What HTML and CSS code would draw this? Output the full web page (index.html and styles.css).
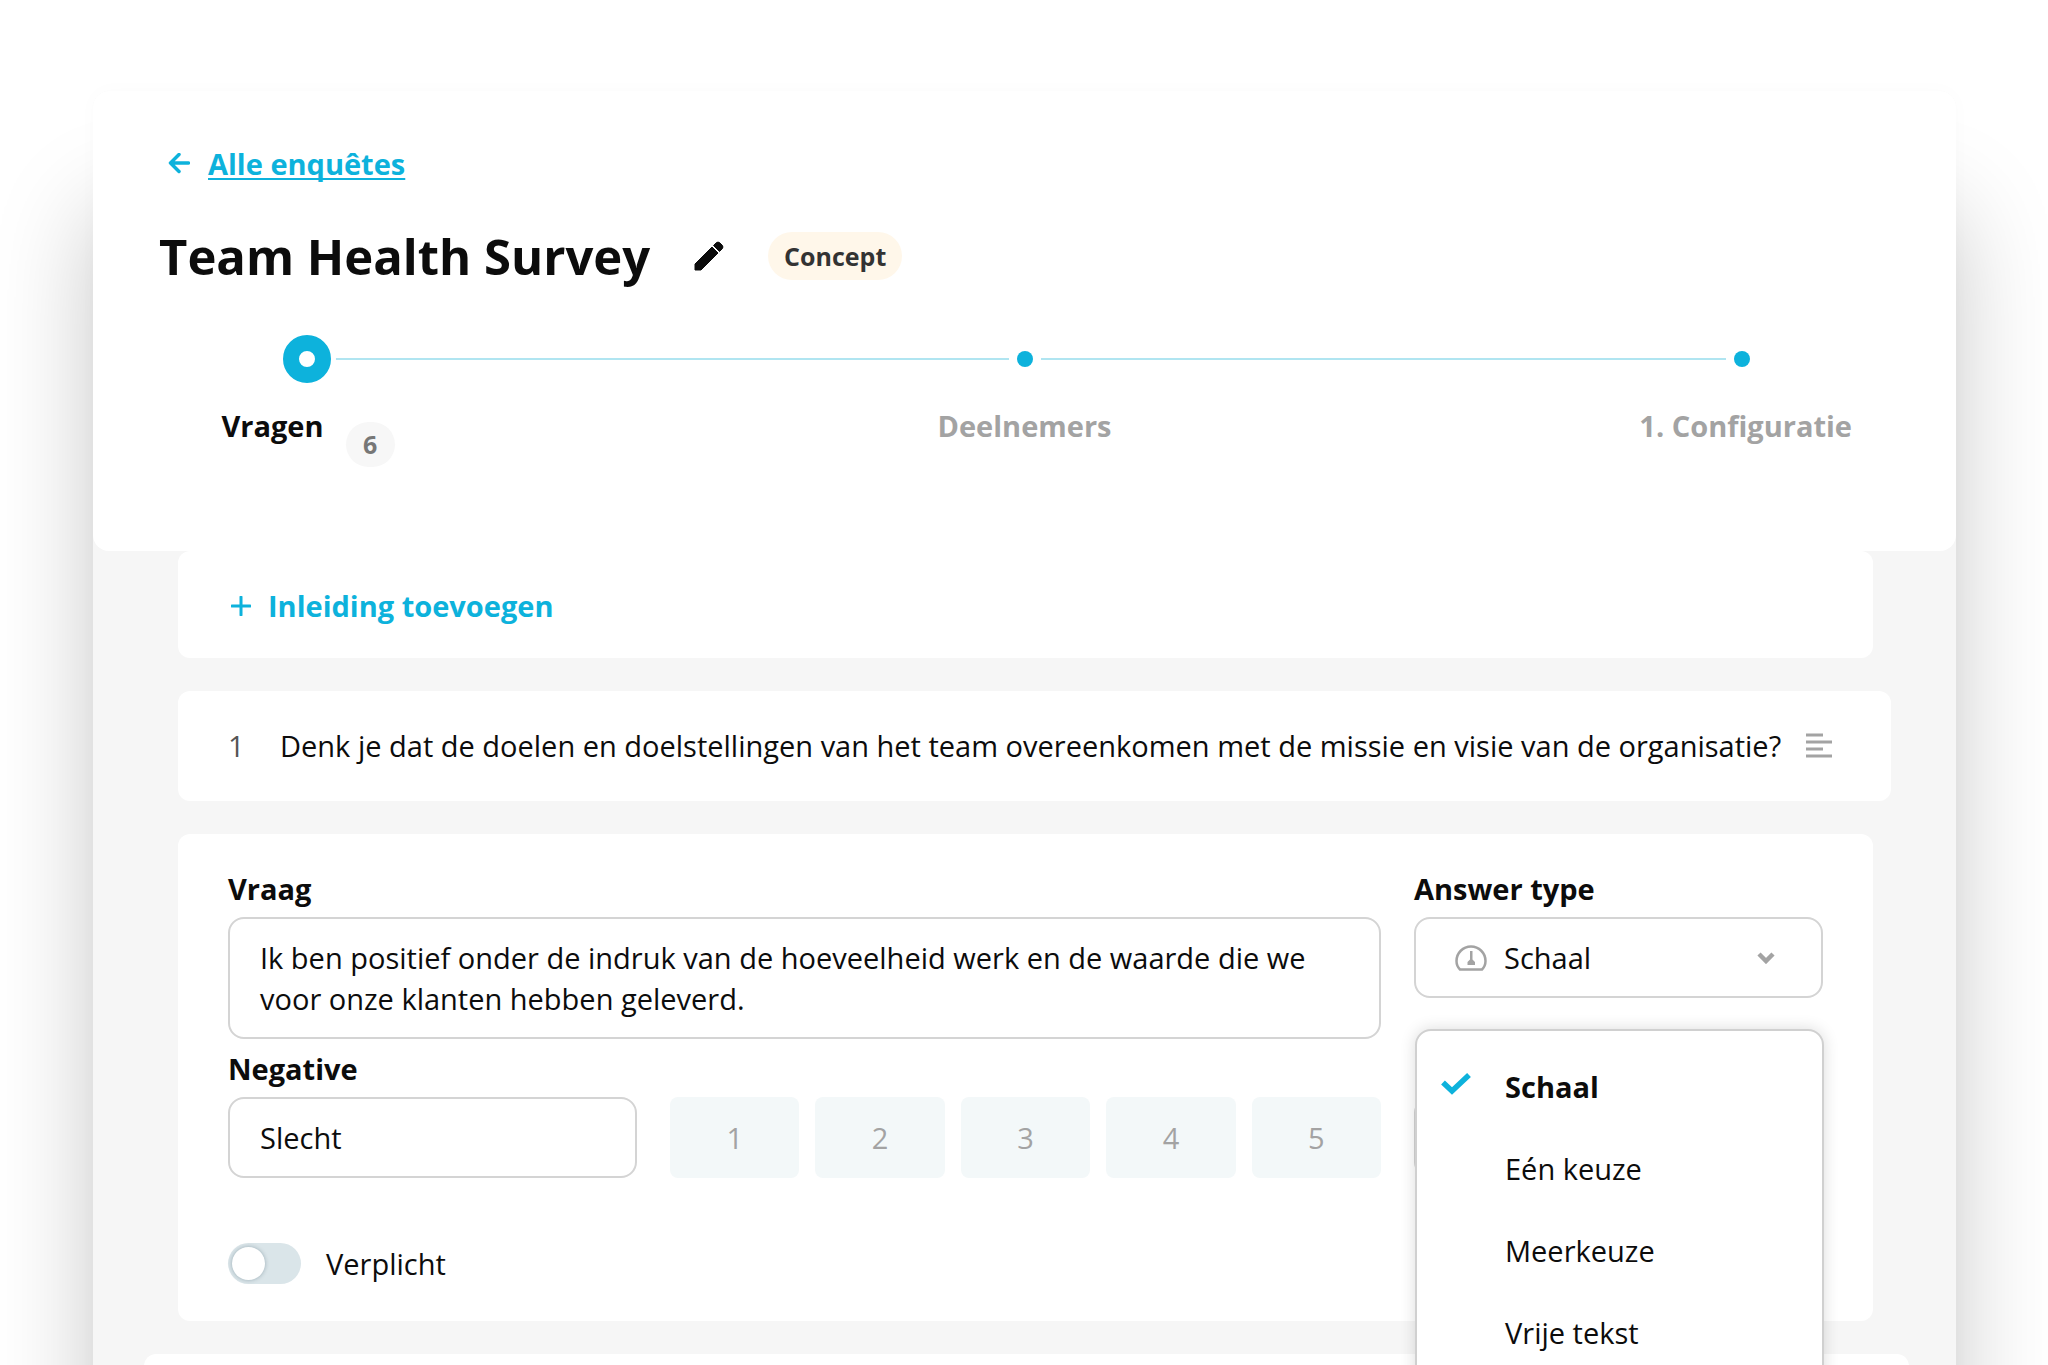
FILE: index.html
```html
<!DOCTYPE html>
<html lang="nl">
	<head>
		<meta charset="UTF-8">
		<title>Team Health Survey</title>
		<link rel="stylesheet" href="styles.css">
	</head>
	<body>
		<main class="panel">
			<header class="header">
				<div class="back">
					<svg class="back-icon" viewBox="0 0 22 22">
						<path d="M20.500 10H2.500M11 1.500L2.500 10l8.500 8.500" fill="none" stroke="currentColor" stroke-width="3.500" stroke-linejoin="round" stroke-linecap="round" />
					</svg>
					<a href="#">Alle enquêtes</a>
				</div>

				<div class="title-row">
					<h1>Team Health Survey</h1>
					<button class="edit" type="button" aria-label="Bewerken">
						<svg viewBox="0 0 30 30">
							<path d="M1 29v-6L18 6l6 6L7 29z M19.500 4.500l2.500-2.500q2-2 4 0l2 2q2 2 0 4l-2.500 2.500z" fill="currentColor" stroke="currentColor" />
						</svg>
					</button>
					<span class="status">Concept</span>
				</div>

				<div class="track">
					<span class="dot dot-active"></span>
					<span class="line"></span>
					<span class="dot"></span>
					<span class="line"></span>
					<span class="dot"></span>
				</div>
				<ol class="steps">
					<li class="step step-active">Vragen <span class="count">6</span></li>
					<li class="step">Deelnemers</li>
					<li class="step step-last">1. Configuratie</li>
				</ol>
			</header>

			<div class="content">
				<section class="card intro">
					<button class="add" type="button">
						<svg viewBox="0 0 20 20">
							<path d="M10 1v18M1 10h18" stroke="currentColor" stroke-width="3" stroke-linecap="round" />
						</svg>
						Inleiding toevoegen
					</button>
				</section>

				<section class="card question">
					<span class="number">1</span>
					<p class="question-text">Denk je dat de doelen en doelstellingen van het team overeenkomen met de missie en visie van de organisatie?</p>
					<svg class="question-icon" viewBox="0 0 26 26">
						<path d="M0 2h17M0 9h26M0 16h17M0 23h26" stroke="currentColor" stroke-width="3" />
					</svg>
				</section>

				<form class="card editor">
					<div class="fields">
						<div class="field field-wide">
							<label for="question">Vraag</label>
							<textarea id="question" rows="2">Ik ben positief onder de indruk van de hoeveelheid werk en de waarde die we voor onze klanten hebben geleverd.</textarea>
						</div>

						<div class="field">
							<label for="type">Answer type</label>
							<div class="select">
								<select id="type">
									<option>Schaal</option>
									<option>Eén keuze</option>
									<option>Meerkeuze</option>
									<option>Vrije tekst</option>
								</select>
								<svg class="gauge" viewBox="0 0 32 26">
									<path d="M5 24.500h22Q30.500 21 30.500 16A14.500 14.500 0 0 0 1.500 16Q1.500 21 5 24.500z" fill="none" stroke="currentColor" stroke-width="2.500" stroke-linejoin="round" />
									<path d="M15 6h2.500v8.500l2.500 2.500v3h-7.500v-3l2.500-2.500z" fill="currentColor" />
								</svg>
								<svg class="chevron" viewBox="0 0 18 12">
									<path d="M2 2l7 7 7-7" fill="none" stroke="currentColor" stroke-width="4.500" />
								</svg>
								<ul class="menu" role="listbox" aria-label="Answer type">
									<li class="selected" role="option" aria-selected="true">
										<svg class="check" viewBox="0 0 30 22">
											<path d="M2 9.500l9 8.500L28 2" fill="none" stroke="currentColor" stroke-width="5.500" />
										</svg>
										Schaal
									</li>
									<li role="option">Eén keuze</li>
									<li role="option">Meerkeuze</li>
									<li role="option">Vrije tekst</li>
								</ul>
							</div>
						</div>

						<div class="field">
							<label for="negative">Negative</label>
							<input id="negative" type="text" value="Slecht">
						</div>

						<div class="scale">
							<button type="button">1</button>
							<button type="button">2</button>
							<button type="button">3</button>
							<button type="button">4</button>
							<button type="button">5</button>
						</div>

						<div class="field field-end">
							<input type="text" aria-label="Positive">
						</div>
					</div>

					<label class="required">
						<input class="toggle" type="checkbox">
						Verplicht
					</label>
				</form>

				<section class="card next"></section>
			</div>
		</main>
	</body>
</html>
```

FILE: styles.css
```css
* {
	box-sizing: border-box;
}

body {
	margin: 0;
	height: 100vh;
	overflow: hidden;
	padding: 91px 92px 0 93px;
	background-color: #fff;
	color: #0c0c0c;
	font-family: "Open Sans", sans-serif;
	font-size: 29px;
	line-height: 41px;
}

h1,
p,
ol,
ul {
	margin: 0;
	padding: 0;
	list-style: none;
}

button,
input,
select,
textarea {
	font: inherit;
	color: inherit;
}

button {
	border: 0;
	padding: 0;
	background: none;
}

svg {
	display: block;
	flex: none;
}

.panel {
	min-height: 100vh;
	border-radius: 16px 16px 0 0;
	background-color: #f6f6f6;
	box-shadow: 0 120px 100px rgba(0, 0, 0, 0.22), 0 0 20px rgba(0, 0, 0, 0.02);
}

/* header */

.header {
	padding: 52px 0 84px;
	border-radius: 16px;
	background-color: #fff;
}

.back {
	display: flex;
	align-items: center;
	gap: 18px;
	padding-left: 75px;
	color: #0db2dc;
	font-weight: 700;
}

.back-icon {
	width: 22px;
	height: 22px;
}

.back a {
	color: inherit;
	text-decoration-thickness: 2px;
	text-underline-offset: 3px;
	text-decoration-skip-ink: none;
}

.title-row {
	display: flex;
	align-items: center;
	margin-top: 39px;
	padding-left: 66px;
}

h1 {
	font-size: 49px;
	line-height: 66px;
	font-weight: 700;
}

.edit {
	margin: 0 44px;
}

.edit svg {
	width: 30px;
	height: 30px;
}

.status {
	padding: 0 16px;
	border-radius: 24px;
	background-color: #fff7ea;
	color: #333;
	font-size: 25px;
	line-height: 48px;
	font-weight: 700;
}

.track {
	display: flex;
	align-items: center;
	margin-top: 46px;
	padding: 0 206px;
}

.dot {
	width: 16px;
	height: 16px;
	border-radius: 50%;
	background-color: #0db2dc;
}

.dot-active {
	position: relative;
	width: 48px;
	height: 48px;
	margin: 0 -16px;
	border: 16px solid #0db2dc;
	background-color: #fff;
	box-shadow: 0 0 0 5px #fff;
}

.line {
	flex: 1;
	height: 2px;
	margin: 0 8px;
	background-color: #b0e5f1;
}

.steps {
	display: flex;
	justify-content: space-between;
	margin-top: 22px;
	padding: 0 104px;
	color: #a3a3a3;
	font-weight: 700;
}

.step {
	display: flex;
	justify-content: center;
	gap: 22px;
	width: 222px;
	white-space: nowrap;
}

.step-active {
	color: #0c0c0c;
}

.step-last {
	justify-content: flex-end;
}

.count {
	width: 49px;
	margin-top: 17px;
	border-radius: 23px;
	background-color: #f7f7f7;
	color: #777;
	font-size: 25px;
	line-height: 45px;
	text-align: center;
}

/* cards */

.content {
	display: flex;
	flex-direction: column;
	gap: 33px;
	padding: 0 83px 0 85px;
}

.card {
	border-radius: 12px;
	background-color: #fff;
}

.intro {
	padding: 34px 50px 32px;
}

.add {
	display: flex;
	align-items: center;
	gap: 17px;
	padding-left: 3px;
	color: #0db2dc;
	font-weight: 700;
}

.add svg {
	width: 20px;
	height: 20px;
}

.question {
	display: flex;
	align-items: center;
	margin-right: -18px;
	padding: 34px 59px 35px 50px;
}

.number {
	width: 52px;
	color: #555;
}

.question-text {
	flex: 1;
	white-space: nowrap;
}

.question-icon {
	width: 26px;
	height: 26px;
	color: #a3a3a3;
}

.editor {
	padding: 34px 50px 37px;
}

.next {
	height: 160px;
	margin: 0 -36px 0 -34px;
}

/* form */

.fields {
	display: grid;
	grid-template-columns: 409fr 711fr 409fr;
	gap: 9px 33px;
}

.field label {
	display: block;
	margin-bottom: 8px;
	font-weight: 700;
}

.field-wide {
	grid-column: span 2;
}

.field-end {
	align-self: end;
}

.field textarea,
.field input,
.field select {
	display: block;
	width: 100%;
	height: 81px;
	padding: 0 30px;
	border: 2px solid #d4d4d4;
	border-radius: 16px;
	background-color: #fff;
}

.field textarea {
	height: 122px;
	padding: 18px 30px;
	resize: none;
	overflow: hidden;
}

.select {
	position: relative;
}

.field select {
	appearance: none;
	padding-left: 88px;
}

.gauge,
.chevron {
	position: absolute;
	top: 0;
	bottom: 0;
	margin: auto 0;
	color: #a3a3a3;
}

.gauge {
	left: 41px;
	width: 32px;
	height: 26px;
}

.chevron {
	right: 48px;
	width: 18px;
	height: 12px;
}

.menu {
	position: absolute;
	z-index: 1;
	top: 112px;
	left: 1px;
	right: -1px;
	padding: 15px 0;
	border: 2px solid #d0d0d0;
	border-radius: 16px;
	background-color: #fff;
	box-shadow: 0 0 16px rgba(0, 0, 0, 0.14);
}

.menu li {
	position: relative;
	padding-left: 88px;
	line-height: 82px;
}

.menu .selected {
	font-weight: 700;
}

.check {
	position: absolute;
	top: 27px;
	left: 24px;
	width: 30px;
	height: 22px;
	color: #0db2dc;
}

.scale {
	display: flex;
	align-items: flex-end;
	gap: 16px;
}

.scale button {
	flex: 1;
	height: 81px;
	border-radius: 8px;
	background-color: #f3f8f9;
	color: #a3a3a3;
}

.required {
	display: flex;
	align-items: center;
	gap: 25px;
	width: fit-content;
	margin-top: 65px;
}

.toggle {
	appearance: none;
	width: 73px;
	height: 41px;
	margin: 0;
	padding: 4px;
	border-radius: 21px;
	background-color: #dae5e9;
}

.toggle::before {
	content: "";
	display: block;
	width: 33px;
	height: 33px;
	border-radius: 50%;
	background-color: #fff;
	box-shadow: 0 0 4px rgba(0, 40, 60, 0.3);
}
```
